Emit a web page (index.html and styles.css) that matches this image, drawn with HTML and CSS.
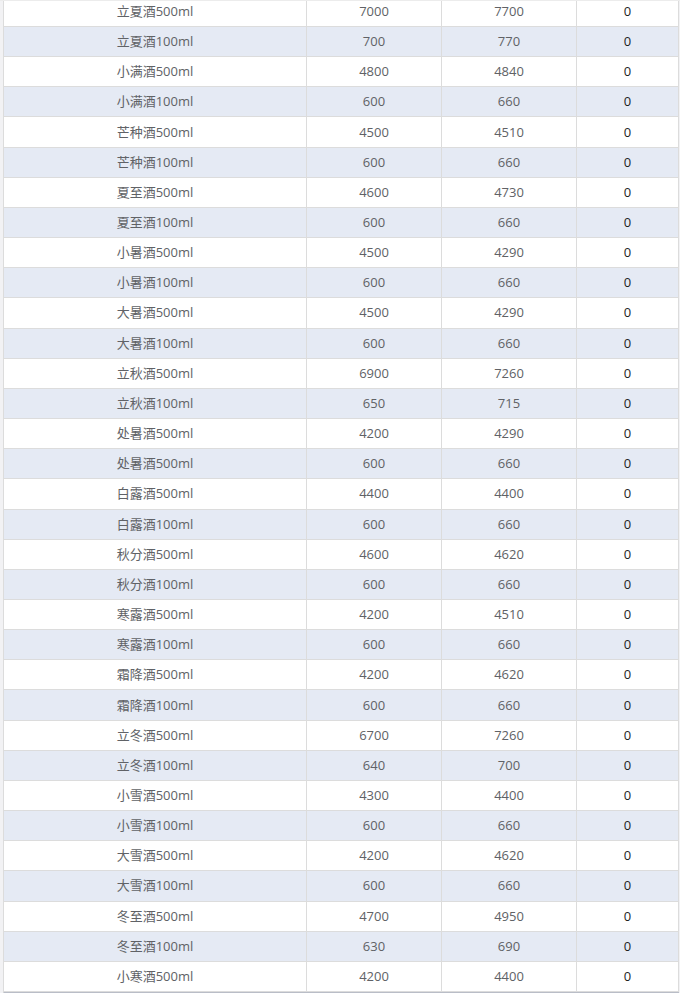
FILE: index.html
```html
<!DOCTYPE html>
<html lang="zh-CN">
<head>
<meta charset="utf-8">
<title>价格表</title>
<link rel="stylesheet" href="styles.css">
</head>
<body>
<div class="page">
  <div class="table">
    <div class="row"><div class="cell">立夏酒500ml</div><div class="cell">7000</div><div class="cell">7700</div><div class="cell zero">0</div></div>
    <div class="row"><div class="cell">立夏酒100ml</div><div class="cell">700</div><div class="cell">770</div><div class="cell zero">0</div></div>
    <div class="row"><div class="cell">小满酒500ml</div><div class="cell">4800</div><div class="cell">4840</div><div class="cell zero">0</div></div>
    <div class="row"><div class="cell">小满酒100ml</div><div class="cell">600</div><div class="cell">660</div><div class="cell zero">0</div></div>
    <div class="row"><div class="cell">芒种酒500ml</div><div class="cell">4500</div><div class="cell">4510</div><div class="cell zero">0</div></div>
    <div class="row"><div class="cell">芒种酒100ml</div><div class="cell">600</div><div class="cell">660</div><div class="cell zero">0</div></div>
    <div class="row"><div class="cell">夏至酒500ml</div><div class="cell">4600</div><div class="cell">4730</div><div class="cell zero">0</div></div>
    <div class="row"><div class="cell">夏至酒100ml</div><div class="cell">600</div><div class="cell">660</div><div class="cell zero">0</div></div>
    <div class="row"><div class="cell">小暑酒500ml</div><div class="cell">4500</div><div class="cell">4290</div><div class="cell zero">0</div></div>
    <div class="row"><div class="cell">小暑酒100ml</div><div class="cell">600</div><div class="cell">660</div><div class="cell zero">0</div></div>
    <div class="row"><div class="cell">大暑酒500ml</div><div class="cell">4500</div><div class="cell">4290</div><div class="cell zero">0</div></div>
    <div class="row"><div class="cell">大暑酒100ml</div><div class="cell">600</div><div class="cell">660</div><div class="cell zero">0</div></div>
    <div class="row"><div class="cell">立秋酒500ml</div><div class="cell">6900</div><div class="cell">7260</div><div class="cell zero">0</div></div>
    <div class="row"><div class="cell">立秋酒100ml</div><div class="cell">650</div><div class="cell">715</div><div class="cell zero">0</div></div>
    <div class="row"><div class="cell">处暑酒500ml</div><div class="cell">4200</div><div class="cell">4290</div><div class="cell zero">0</div></div>
    <div class="row"><div class="cell">处暑酒500ml</div><div class="cell">600</div><div class="cell">660</div><div class="cell zero">0</div></div>
    <div class="row"><div class="cell">白露酒500ml</div><div class="cell">4400</div><div class="cell">4400</div><div class="cell zero">0</div></div>
    <div class="row"><div class="cell">白露酒100ml</div><div class="cell">600</div><div class="cell">660</div><div class="cell zero">0</div></div>
    <div class="row"><div class="cell">秋分酒500ml</div><div class="cell">4600</div><div class="cell">4620</div><div class="cell zero">0</div></div>
    <div class="row"><div class="cell">秋分酒100ml</div><div class="cell">600</div><div class="cell">660</div><div class="cell zero">0</div></div>
    <div class="row"><div class="cell">寒露酒500ml</div><div class="cell">4200</div><div class="cell">4510</div><div class="cell zero">0</div></div>
    <div class="row"><div class="cell">寒露酒100ml</div><div class="cell">600</div><div class="cell">660</div><div class="cell zero">0</div></div>
    <div class="row"><div class="cell">霜降酒500ml</div><div class="cell">4200</div><div class="cell">4620</div><div class="cell zero">0</div></div>
    <div class="row"><div class="cell">霜降酒100ml</div><div class="cell">600</div><div class="cell">660</div><div class="cell zero">0</div></div>
    <div class="row"><div class="cell">立冬酒500ml</div><div class="cell">6700</div><div class="cell">7260</div><div class="cell zero">0</div></div>
    <div class="row"><div class="cell">立冬酒100ml</div><div class="cell">640</div><div class="cell">700</div><div class="cell zero">0</div></div>
    <div class="row"><div class="cell">小雪酒500ml</div><div class="cell">4300</div><div class="cell">4400</div><div class="cell zero">0</div></div>
    <div class="row"><div class="cell">小雪酒100ml</div><div class="cell">600</div><div class="cell">660</div><div class="cell zero">0</div></div>
    <div class="row"><div class="cell">大雪酒500ml</div><div class="cell">4200</div><div class="cell">4620</div><div class="cell zero">0</div></div>
    <div class="row"><div class="cell">大雪酒100ml</div><div class="cell">600</div><div class="cell">660</div><div class="cell zero">0</div></div>
    <div class="row"><div class="cell">冬至酒500ml</div><div class="cell">4700</div><div class="cell">4950</div><div class="cell zero">0</div></div>
    <div class="row"><div class="cell">冬至酒100ml</div><div class="cell">630</div><div class="cell">690</div><div class="cell zero">0</div></div>
    <div class="row"><div class="cell">小寒酒500ml</div><div class="cell">4200</div><div class="cell">4400</div><div class="cell zero">0</div></div>
  </div>
</div>
</body>
</html>
```

FILE: styles.css
```css
html, body {
  margin: 0;
  padding: 0;
  background: #f2f2f4;
}

.page {
  padding: 0 1px 0 3px;
  overflow: hidden;
  height: 993px;
  border-top: 1px solid #ececec;
  box-sizing: border-box;
}

.table {
  margin-top: -4.17px;
  background: #ffffff;
  border-left: 1px solid #dcdcdc;
  border-bottom: 2px solid #b9bdc7;
  font-family: "Open Sans", "Noto Sans CJK SC", sans-serif;
  font-size: 13px;
  color: #606266;
}

.row {
  display: grid;
  grid-template-columns: 303px 135px 135px 102px;
  height: 30.17px;
  background: #ffffff;
}

.row:nth-child(even) {
  background: #e5eaf4;
}

.cell {
  box-sizing: border-box;
  display: flex;
  align-items: center;
  justify-content: center;
  border-right: 1px solid #dcdcdc;
  border-bottom: 1px solid #dcdcdc;
  white-space: nowrap;
  line-height: 1;
}

.zero {
  color: #1e1e1e;
}
```
